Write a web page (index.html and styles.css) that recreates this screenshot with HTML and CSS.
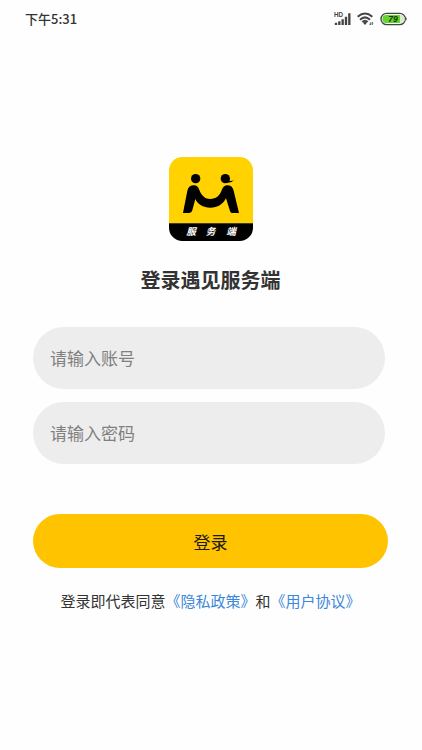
FILE: index.html
```html
<!DOCTYPE html>
<html lang="zh-CN">
<head>
<meta charset="utf-8">
<meta name="viewport" content="width=device-width, initial-scale=1">
<title>登录遇见服务端</title>
<link rel="stylesheet" href="styles.css">
</head>
<body>
<header class="status">
  <time class="status-time">下午5:31</time>
  <div class="status-icons">
    <svg class="icon-signal" viewBox="0 0 51 42" aria-hidden="true">
      <text class="hd" x="0" y="15">HD</text>
      <path d="M6 39v-7M16 39V28M26 39V22M36 39V14M46 39V4" fill="none" stroke="#444" stroke-width="7"/>
    </svg>
    <svg class="icon-wifi" viewBox="0 0 51 42" aria-hidden="true">
      <path d="M2 14Q24-5 46 14M9 23Q24 9 39 23M16 30Q24 22 32 30" fill="none" stroke="#444" stroke-width="6"/>
      <path d="M18 32Q24 27 30 32L24 39Z" fill="#444"/>
      <path d="M40 31v8M46 31v8M38 36l2 3 2-3M44 34l2-3 2 3" fill="none" stroke="#666" stroke-width="3"/>
    </svg>
    <svg class="icon-battery" viewBox="0 0 81 42" aria-hidden="true">
      <rect x="3" y="4" width="73" height="34" rx="17" fill="#fff" stroke="#444" stroke-width="4"/>
      <path d="M78 16q4 5 0 10z" fill="#444"/>
      <path d="M19 9H60V33H19A12 12 0 0 1 19 9Z" fill="#64d52c"/>
      <path d="M60 9h2a12 12 0 0 1 0 24h-2z" fill="#d5edc9"/>
      <text class="level" x="39" y="30">79</text>
    </svg>
  </div>
</header>
<main class="login">
  <svg class="logo" viewBox="30 21 252 252" role="img" aria-label="遇见服务端">
    <defs><clipPath id="tile"><rect x="30" y="21" width="252" height="252" rx="40"/></clipPath></defs>
    <g clip-path="url(#tile)">
      <path d="M30 21H282V220H30Z" fill="#ffd200"/>
      <path d="M30 220H282V273H30Z" fill="#000"/>
    </g>
    <circle cx="110" cy="86" r="14"/>
    <circle cx="199" cy="86" r="14"/>
    <path d="M202 90Q214 96 225 91Q218 99 204 98Z"/>
    <path d="M72 189L85 122Q89 106 105 106Q117 106 121 120C127 137 139 147 154 147C170 147 182 138 188 121Q193 106 205 106Q220 106 224 122L240 189H219Q215 189 213 183L201 145C192 163 176 173 154 173C132 173 116 163 109 147L100 181Q98 189 91 189Z"/>
    <g class="logo-text">
      <text x="96" y="256">服</text>
      <text x="155" y="256">务</text>
      <text x="216" y="256">端</text>
    </g>
  </svg>
  <h1 class="title">登录遇见服务端</h1>
  <form class="form">
    <div class="fields">
      <input class="field" type="text" name="account" placeholder="请输入账号" aria-label="账号">
      <input class="field" type="password" name="password" placeholder="请输入密码" aria-label="密码">
    </div>
    <button class="submit" type="submit">登录</button>
  </form>
  <p class="terms">登录即代表同意<a href="#privacy">《隐私政策》</a>和<a href="#agreement">《用户协议》</a></p>
</main>
</body>
</html>
```
FILE: styles.css
```css
* {
  box-sizing: border-box;
}

body {
  margin: 0;
  background: #fefefe;
  color: #333;
  font-family: "Noto Sans CJK SC", sans-serif;
}

.status {
  display: flex;
  align-items: center;
  justify-content: space-between;
  height: 37px;
  padding: 0 15px 0 25px;
}

.status-time {
  font-size: 13px;
  font-weight: 500;
}

.status-icons {
  display: flex;
  align-items: center;
  gap: 6px;
}

.status-icons svg {
  display: block;
  height: 14px;
}

.icon-signal,
.icon-wifi {
  width: 17px;
}

.icon-battery {
  width: 27px;
}

.hd {
  font: 700 19px "Liberation Sans", sans-serif;
  fill: #444;
}

.level {
  font: italic 700 26px "Liberation Sans", sans-serif;
  text-anchor: middle;
  fill: #173a0c;
}

.login {
  display: flex;
  flex-direction: column;
  align-items: center;
  padding: 120px 34px 24px 33px;
}

.logo {
  display: block;
  width: 84px;
  height: 84px;
}

.logo-text {
  font-size: 29px;
  font-style: italic;
  font-weight: 700;
  text-anchor: middle;
  fill: #fff;
}

.title {
  margin: 24px 0 32px;
  font-size: 20px;
  font-weight: 700;
  line-height: 30px;
}

.form {
  width: 100%;
}

.fields {
  display: grid;
  gap: 13px;
  padding-right: 3px;
}

.field {
  width: 100%;
  height: 62px;
  padding: 0 17px 2px;
  border: 0;
  border-radius: 31px;
  background: #ededed;
  color: #333;
  font: inherit;
  font-size: 17px;
}

.field::placeholder {
  color: #808080;
  opacity: 1;
}

.submit {
  display: block;
  width: 100%;
  height: 54px;
  margin-top: 50px;
  padding: 0;
  border: 0;
  border-radius: 27px;
  background: #ffc300;
  color: #1c1a10;
  font: inherit;
  font-size: 17px;
}

.terms {
  margin: 22px 0 0;
  font-size: 15px;
  line-height: 22px;
  white-space: nowrap;
}

.terms a {
  color: #3b87d9;
  text-decoration: none;
}
```
